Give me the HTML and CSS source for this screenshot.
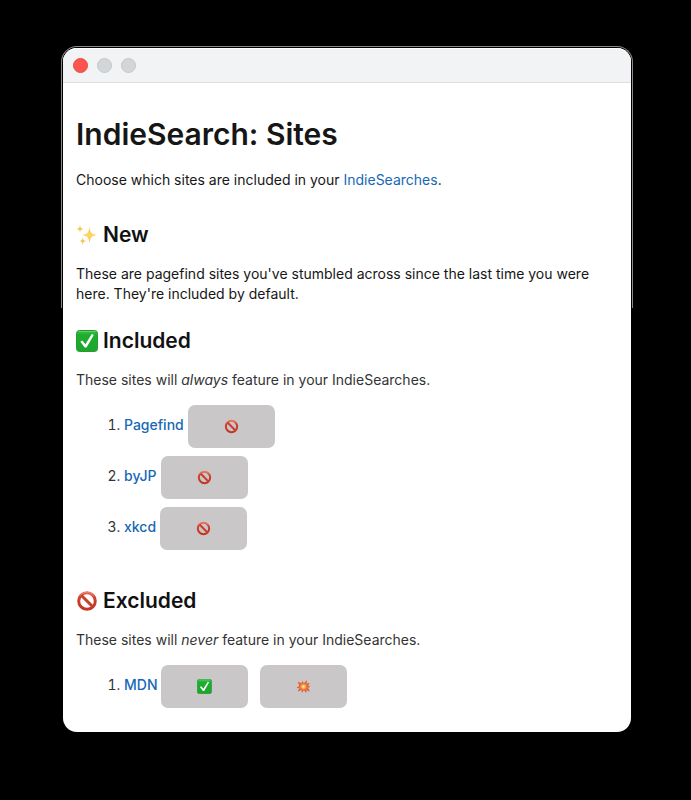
FILE: index.html
```html
<!DOCTYPE html>
<html lang="en">
<head>
<meta charset="utf-8">
<meta name="viewport" content="width=device-width, initial-scale=1">
<title>IndieSearch: Sites</title>
<link rel="stylesheet" href="styles.css">
</head>
<body>
<svg class="defs" aria-hidden="true">
  <defs>
    <linearGradient id="green" x1="0" y1="0" x2="0" y2="1">
      <stop offset="0" stop-color="#3fc650"/><stop offset=".2" stop-color="#1eae2e"/><stop offset="1" stop-color="#1da52e"/>
    </linearGradient>
    <linearGradient id="red" x1="0" y1="0" x2="0" y2="1">
      <stop offset="0" stop-color="#e56a55"/><stop offset=".3" stop-color="#cf4230"/><stop offset="1" stop-color="#c23424"/>
    </linearGradient>
    <radialGradient id="burst">
      <stop offset="0" stop-color="#fff3c0"/><stop offset=".25" stop-color="#ffb45e"/><stop offset=".5" stop-color="#ee7038"/><stop offset="1" stop-color="#d0502f"/>
    </radialGradient>
    <linearGradient id="gold" x1="0" y1="0" x2="0" y2="1">
      <stop offset="0" stop-color="#f3bd4c"/><stop offset=".5" stop-color="#fbd968"/><stop offset="1" stop-color="#efb64b"/>
    </linearGradient>
    <symbol id="check" viewBox="0 0 22 22">
      <rect x=".5" y=".5" width="21" height="21" rx="3" fill="url(#green)" stroke="#249b36"/>
      <path d="M2.500 1.500H19.500" stroke="#5fce6c" stroke-width="1"/>
      <path d="M4.300 11.800l2-1.300 3.100 3.700L15.800 4l2 .9-7.300 12.600H8.800z" fill="#fff"/>
    </symbol>
    <symbol id="ban" viewBox="0 0 22 22">
      <circle cx="11" cy="11" r="8.300" fill="none" stroke="url(#red)" stroke-width="3"/>
      <path d="M5.200 5.200l11.600 11.600" stroke="#cc3e2c" stroke-width="3"/>
      <path d="M4 5.500a9 9 0 0 1 14 0" fill="none" stroke="#e88b79" stroke-width=".8"/>
    </symbol>
    <symbol id="sparkles" viewBox="0 0 22 22">
      <path fill="url(#gold)" d="M13.500 2.500c.7 6 1.700 7.500 7.500 8.500-5.800 1-6.800 2.500-7.500 8.500-.7-6-1.700-7.500-7.500-8.500 5.800-1 6.800-2.500 7.500-8.500zM4 1c.4 2.700 1 3.600 3.500 4C5 5.400 4.400 6.300 4 9 3.600 6.300 3 5.400.5 5 3 4.600 3.600 3.700 4 1zM6.800 13c.4 2.900.9 3.600 3.200 4-2.300.4-2.800 1.100-3.200 4-.4-2.900-.9-3.600-3.200-4 2.300-.4 2.800-1.100 3.200-4z"/>
    </symbol>
    <symbol id="boom" viewBox="0 0 22 22">
      <path fill="url(#burst)" d="M3 4l5 2.300L9 3l2.700 2.700L16 2l-.4 4.600L20 5.800l-2.300 3.700 3.300 2-3.400 1.300 2.700 6-4.700-2.500-.6 4.200-3.300-4L8.600 20 8 16l-5.300 2.500L5 13.700l-4-.6L4.600 10z"/>
    </symbol>
  </defs>
</svg>

<div class="window">
  <header class="titlebar">
    <button class="dot dot-close" type="button" aria-label="Close"></button>
    <button class="dot" type="button" aria-label="Minimise"></button>
    <button class="dot" type="button" aria-label="Zoom"></button>
  </header>
  <main>
    <h1>IndieSearch: Sites</h1>
    <p>Choose which sites are included in your <a href="#">IndieSearches</a>.</p>

    <section>
      <h2><svg class="emoji" aria-hidden="true"><use href="#sparkles"/></svg>New</h2>
      <p>These are pagefind sites you've stumbled across since the last time you were here. They're included by default.</p>
    </section>

    <section class="muted tight">
      <h2><svg class="emoji" aria-hidden="true"><use href="#check"/></svg>Included</h2>
      <p>These sites will <em>always</em> feature in your IndieSearches.</p>
      <ol>
        <li><a href="#">Pagefind</a> <button class="action" type="button" aria-label="Exclude Pagefind"><svg aria-hidden="true"><use href="#ban"/></svg></button></li>
        <li><a href="#">byJP</a> <button class="action" type="button" aria-label="Exclude byJP"><svg aria-hidden="true"><use href="#ban"/></svg></button></li>
        <li><a href="#">xkcd</a> <button class="action" type="button" aria-label="Exclude xkcd"><svg aria-hidden="true"><use href="#ban"/></svg></button></li>
      </ol>
    </section>

    <section class="muted spaced">
      <h2><svg class="emoji" aria-hidden="true"><use href="#ban"/></svg>Excluded</h2>
      <p>These sites will <em>never</em> feature in your IndieSearches.</p>
      <ol>
        <li><a href="#">MDN</a> <button class="action" type="button" aria-label="Include MDN"><svg aria-hidden="true"><use href="#check"/></svg></button><button class="action" type="button" aria-label="Forget MDN"><svg aria-hidden="true"><use href="#boom"/></svg></button></li>
      </ol>
    </section>
  </main>
</div>
</body>
</html>
```
FILE: styles.css
```css
* { box-sizing: border-box; }

body {
  margin: 0;
  padding: 48px 60px 48px 63px;
  background: #000;
  color: #161616;
  font: 14px/20px Inter, "Liberation Sans", sans-serif;
}

.defs { position: absolute; width: 0; height: 0; }

.window {
  position: relative;
  background: #fff;
  border-radius: 14px;
}

/* Hairline round the upper part of the window frame */
.window::before {
  content: "";
  position: absolute;
  inset: -2px -2px auto;
  height: 261px;
  border: 1px solid #888;
  border-bottom: 0;
  border-radius: 16px 16px 0 0;
  pointer-events: none;
}

.titlebar {
  display: flex;
  align-items: center;
  gap: 9px;
  height: 35px;
  padding: 0 10px;
  background: #f2f3f4;
  border-top: 1px solid #fff;
  border-bottom: 1px solid #dcdfe0;
  border-radius: 14px 14px 0 0;
}

.dot {
  width: 15px;
  height: 15px;
  padding: 0;
  border: 1px solid #c5c8ca;
  border-radius: 50%;
  background: #d3d6d8;
}

.dot-close { background: #fc554f; border-color: #e94b45; }

main { padding: 31px 13px 24px; }

h1, h2, p, ol { margin: 0; }

h1 {
  margin-bottom: 16px;
  font-size: 30px;
  line-height: 40px;
  font-weight: 600;
}

h2 {
  display: flex;
  align-items: center;
  gap: 5px;
  margin-bottom: 15px;
  color: #111;
  font-size: 21px;
  line-height: 28px;
  font-weight: 600;
}

section { margin-top: 31px; }
.tight { margin-top: 23px; }
.spaced { margin-top: 37px; }
.muted { color: #333; }

.emoji { width: 22px; height: 22px; }

a { color: #1768b5; text-decoration: none; }
.muted a { font-weight: 500; }

ol {
  margin-top: 15px;
  padding-left: 48px;
}

li + li { margin-top: 8px; }

.action {
  display: inline-flex;
  align-items: center;
  justify-content: center;
  width: 87px;
  height: 43px;
  padding: 0;
  border: 0;
  border-radius: 7px;
  background: #c9c7c8;
  vertical-align: middle;
}

.action + .action { margin-left: 12px; }
.action svg { width: 15px; height: 15px; }
```
